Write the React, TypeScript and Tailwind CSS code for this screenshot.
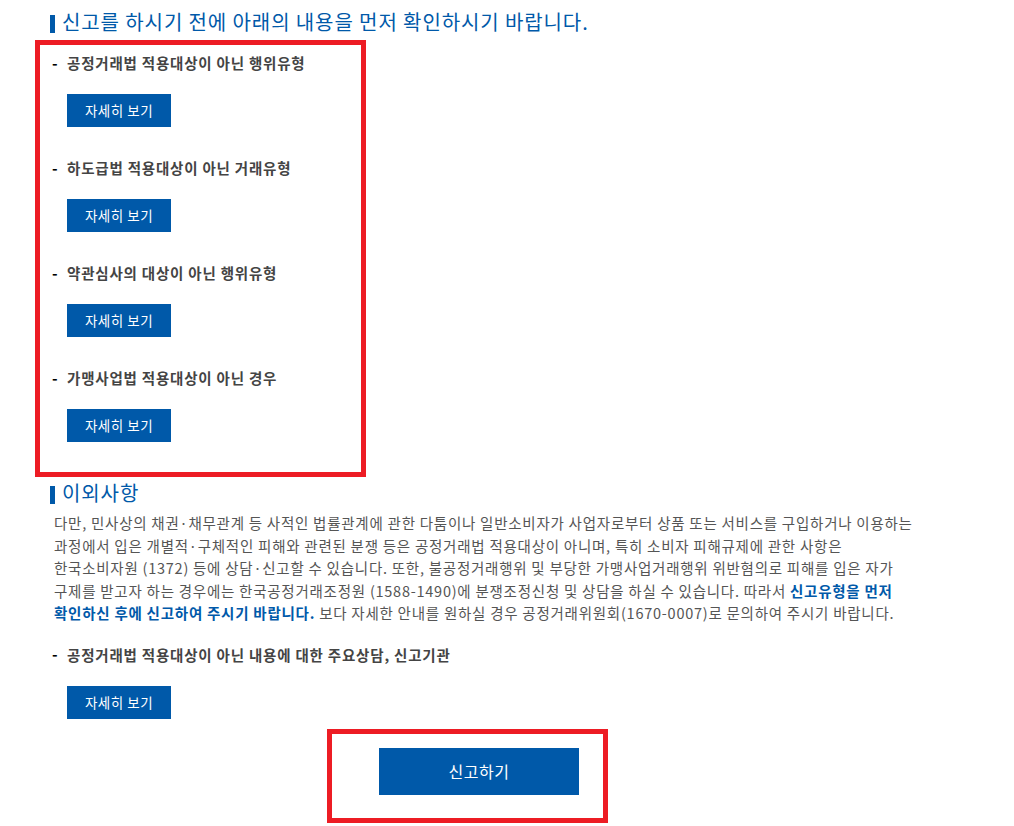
const font = { fontFamily: '"Malgun Gothic", "Noto Sans CJK KR", "Liberation Sans", sans-serif' }

const items = [
  "공정거래법 적용대상이 아닌 행위유형",
  "하도급법 적용대상이 아닌 거래유형",
  "약관심사의 대상이 아닌 행위유형",
  "가맹사업법 적용대상이 아닌 경우",
]

function Heading({ children }: { children: React.ReactNode }) {
  return (
    <div className="flex items-center ml-[50px]">
      <span className="w-[5px] h-[18px] bg-[#0059a9] mt-[4px]" />
      <h2 className="ml-[7px] text-[20px] leading-[24px] text-[#0059a9] font-normal tracking-[0.9px]">
        {children}
      </h2>
    </div>
  )
}

function Item({ title }: { title: string }) {
  return (
    <div>
      <div className="flex items-center h-[20px]">
        <span className="w-[14px] -ml-[1px] text-[15px] font-bold text-black">-</span>
        <span className="ml-[1px] text-[14.5px] font-bold text-[#444] tracking-[0.8px]">{title}</span>
      </div>
      <button className="ml-[14px] mt-[21px] w-[104px] h-[33px] bg-[#0059a9] text-white text-[13.5px] tracking-[0.5px]">
        자세히 보기
      </button>
    </div>
  )
}

export default function App() {
  return (
    <div className="w-[1014px] h-[826px] bg-white overflow-hidden pt-[10px]" style={font}>
      <Heading>신고를 하시기 전에 아래의 내용을 먼저 확인하시기 바랍니다.</Heading>

      <div className="ml-[35px] mt-[6px] w-[331px] h-[437px] border-[5px] border-[#ed1c24] pl-[13px] pt-[8px] flex flex-col gap-[31px]">
        {items.map((t) => (
          <Item key={t} title={t} />
        ))}
      </div>

      <div className="mt-[4px]">
        <Heading>이외사항</Heading>
      </div>

      <p className="ml-[54px] mt-[7px] w-[940px] text-[14.5px] leading-[22.5px] text-[#555] tracking-[0.75px]">
        다만, 민사상의 채권·채무관계 등 사적인 법률관계에 관한 다툼이나 일반소비자가 사업자로부터 상품 또는 서비스를 구입하거나 이용하는
        <br />
        과정에서 입은 개별적·구체적인 피해와 관련된 분쟁 등은 공정거래법 적용대상이 아니며, 특히 소비자 피해규제에 관한 사항은
        <br />
        한국소비자원 (1372) 등에 상담·신고할 수 있습니다. 또한, 불공정거래행위 및 부당한 가맹사업거래행위 위반혐의로 피해를 입은 자가
        <br />
        구제를 받고자 하는 경우에는 한국공정거래조정원 (1588-1490)에 분쟁조정신청 및 상담을 하실 수 있습니다. 따라서{" "}
        <strong className="text-[#0059a9]">신고유형을 먼저</strong>
        <br />
        <strong className="text-[#0059a9]">확인하신 후에 신고하여 주시기 바랍니다.</strong> 보다 자세한 안내를 원하실 경우 공정거래위원회(1670-0007)로 문의하여 주시기 바랍니다.
      </p>

      <div className="ml-[53px] mt-[20px]">
        <Item title="공정거래법 적용대상이 아닌 내용에 대한 주요상담, 신고기관" />
      </div>

      <div className="ml-[327px] mt-[10px] w-[281px] h-[94px] border-[5px] border-[#ed1c24] flex items-start pl-[47px] pt-[14px]">
        <button className="w-[200px] h-[47px] bg-[#0059a9] text-white text-[16px] tracking-[0.5px]">신고하기</button>
      </div>
    </div>
  )
}
